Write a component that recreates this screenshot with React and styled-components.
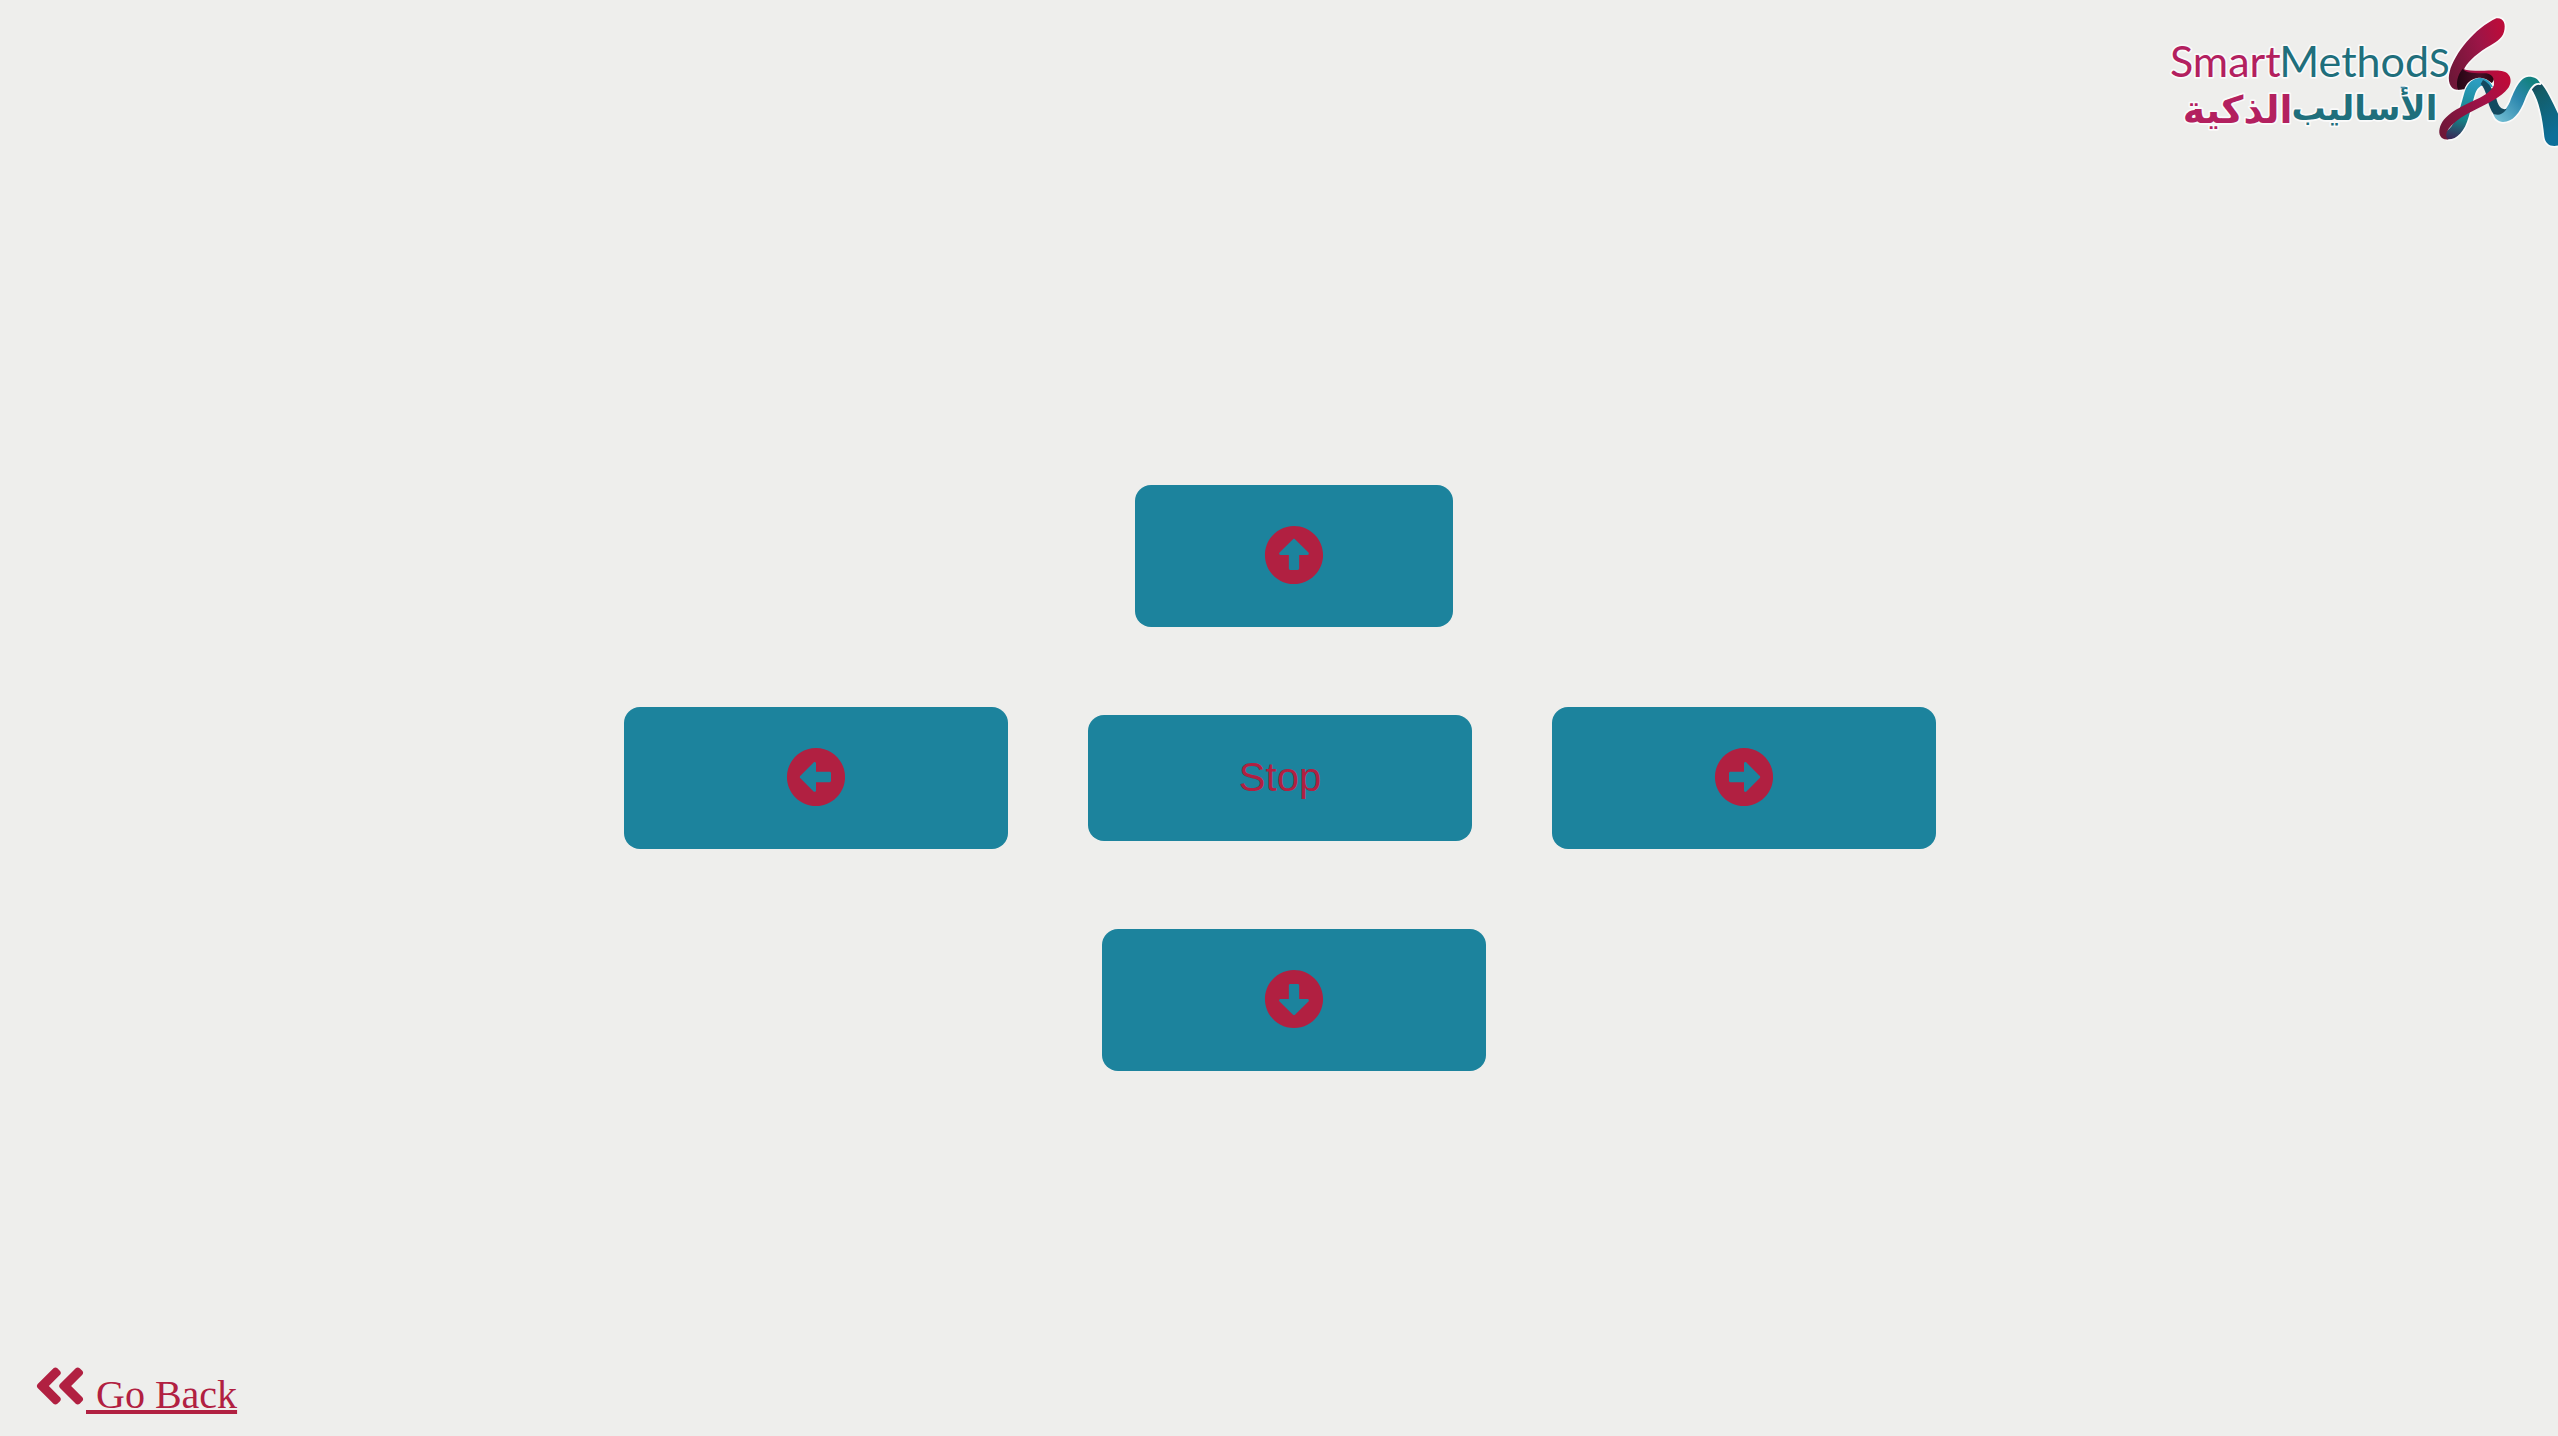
import React from "react";
import styled, { createGlobalStyle } from "styled-components";
import {
  FaArrowAltCircleUp,
  FaArrowAltCircleLeft,
  FaArrowAltCircleRight,
  FaArrowAltCircleDown,
  FaAngleDoubleLeft,
} from "react-icons/fa";

const GlobalStyle = createGlobalStyle`
  *, *::before, *::after { box-sizing: border-box; }
  body { margin: 0; background: #eeeeec; }
`;

const Page = styled.div`
  min-height: 100vh;
  display: flex;
  flex-direction: column;
  font-family: "Liberation Serif", "Times New Roman", serif;
`;

const Header = styled.header`
  display: flex;
  justify-content: flex-end;
  height: 200px;
`;

const LogoArt = styled.svg`
  display: block;
  width: 400px;
  height: 160px;
`;

const Pad = styled.main`
  flex: 1;
  display: flex;
  flex-direction: column;
  justify-content: center;
  gap: 80px;
  padding-left: 2px;
`;

const PadRow = styled.div`
  display: flex;
  justify-content: center;
  align-items: center;
  gap: 80px;
  padding-left: ${(p) => (p.$shifted ? "28px" : "0")};
`;

const PadButton = styled.button`
  display: flex;
  justify-content: center;
  width: ${(p) => (p.$narrow ? "318px" : "384px")};
  padding: ${(p) => (p.$icon ? "40px 0 42px" : "39px 0 41px")};
  border: 0;
  border-radius: 16px;
  background: #1c839d;
  color: #b12041;
  font-family: "Liberation Sans", Arial, sans-serif;
  font-size: 40px;
  line-height: 46px;
  cursor: pointer;

  svg {
    display: block;
    width: 60px;
    height: 60px;
  }
`;

const Footer = styled.footer`
  display: flex;
  height: 80px;
  padding: 0 30px;
`;

const BackLink = styled.a`
  display: flex;
  align-items: flex-start;
  padding-left: 4px;
  color: #b12041;
  font-size: 40px;
  line-height: 46px;
  text-decoration: none;

  svg {
    display: block;
    width: 52px;
    height: 60px;
  }
`;

const BackText = styled.span`
  padding-top: 16px;
  white-space: pre;
  text-decoration: underline;
  text-decoration-thickness: 4px;
  text-underline-offset: 2px;
  text-decoration-skip-ink: none;
`;

const LatinText = styled.text`
  font-family: Lato, "Open Sans", sans-serif;
  font-size: ${(p) => p.$size};
  fill: ${(p) => p.$color};
`;

const ArabicText = styled.text`
  font-family: "DejaVu Sans", sans-serif;
  font-size: ${(p) => p.$size};
  font-weight: 700;
  fill: ${(p) => p.$color};
`;

const Halo = styled.g`
  paint-order: stroke;
  stroke: #fafafa;
  stroke-width: 10px;
  stroke-linejoin: round;
`;

function Logo() {
  return (
    <LogoArt viewBox="0 0 1200 480" role="img" aria-label="Smart Methods">
      <defs>
        <linearGradient id="redTop" x1="0" y1="0.7" x2="1" y2="0.3">
          <stop offset="0" stopColor="#6f1738" />
          <stop offset="0.6" stopColor="#9c1547" />
          <stop offset="1" stopColor="#bb0c3a" />
        </linearGradient>
        <linearGradient id="redFront" x1="0" y1="0.8" x2="1" y2="0.2">
          <stop offset="0" stopColor="#6f1738" />
          <stop offset="0.6" stopColor="#a01248" />
          <stop offset="1" stopColor="#bf0a38" />
        </linearGradient>
        <linearGradient id="fold" x1="0" y1="0" x2="1" y2="0">
          <stop offset="0" stopColor="#250513" />
          <stop offset="0.6" stopColor="#4a0f28" />
          <stop offset="1" stopColor="#25040f" />
        </linearGradient>
        <linearGradient id="legLeft" x1="0.4" y1="0" x2="0.2" y2="1">
          <stop offset="0" stopColor="#2b9dc0" />
          <stop offset="0.65" stopColor="#158286" />
          <stop offset="1" stopColor="#3a2656" />
        </linearGradient>
        <linearGradient id="rise" x1="0" y1="0.9" x2="1" y2="0">
          <stop offset="0" stopColor="#74bfd4" />
          <stop offset="0.5" stopColor="#2c87ae" />
          <stop offset="0.85" stopColor="#12817f" />
        </linearGradient>
        <linearGradient id="legRight" x1="0" y1="0" x2="0.3" y2="1">
          <stop offset="0" stopColor="#17304f" />
          <stop offset="0.3" stopColor="#135c66" />
          <stop offset="1" stopColor="#0d6f99" />
        </linearGradient>
      </defs>

      <Halo>
        <LatinText x="36" y="231" $size="129px" $color="#b3205f">Smart</LatinText>
        <LatinText x="364" y="231" $size="129px" $color="#1f6f7c">
          Method<tspan fontSize="114">S</tspan>
        </LatinText>
        <ArabicText x="838" y="360" direction="rtl" $size="102px" $color="#1f6f7c">الأساليب</ArabicText>
        <ArabicText x="404" y="368" direction="rtl" $size="114px" $color="#b3205f">الذكية</ArabicText>
      </Halo>

      <Halo>
        <path fill="url(#legLeft)" d="M850 398C870 400 890 370 903 335L920 275C930 245 950 232 970 234C990 236 1000 250 1005 262L985 258C970 252 957 262 950 285L932 350C920 395 895 420 868 418Z" />
        <path fill="url(#legRight)" d="M1112 232C1150 228 1175 290 1202 345L1202 436C1178 442 1162 432 1159 410C1153 350 1142 290 1112 256Z" />
        <path fill="url(#rise)" d="M1006 342C1030 348 1044 330 1056 305C1070 270 1085 232 1112 230C1130 230 1142 238 1146 250C1125 245 1112 270 1100 300C1085 340 1065 365 1035 366C1020 366 1010 355 1006 342Z" />
        <path fill="url(#redTop)" d="M1015 55C1035 52 1045 70 1038 95C1032 118 1010 128 985 143C950 165 925 190 917 210L912 268L897 269C875 268 868 240 875 215C890 160 950 85 1015 55Z" />
      </Halo>
      <path fill="#124a60" d="M975 240C995 250 1004 268 1014 292C1020 318 1030 332 1046 326C1036 342 1024 346 1007 343C998 330 994 318 990 305C985 280 978 262 968 252Z" />
      <path fill="url(#fold)" d="M914 206C930 218 970 216 1000 216C1012 225 1010 243 1001 249C985 235 975 233 962 233C938 236 925 250 919 268L900 269C893 250 898 225 914 206Z" />
      <path fill="url(#redFront)" d="M915 207C940 216 990 211 1025 212C1060 214 1065 245 1050 265C1030 292 990 310 950 330C910 350 880 370 867 395C862 408 866 415 872 418C850 422 840 405 845 385C855 345 900 325 940 305C975 290 1000 275 1008 255C1010 235 1002 222 985 220C950 220 925 220 915 207Z" />
      <path fill="#4a8ba4" d="M728 260h14v5h-14z" />
    </LogoArt>
  );
}

export default function App() {
  return (
    <>
      <GlobalStyle />
      <Page>
        <Header>
          <Logo />
        </Header>
        <Pad>
          <PadRow $shifted>
            <PadButton type="button" aria-label="Forward" $icon $narrow>
              <FaArrowAltCircleUp />
            </PadButton>
          </PadRow>
          <PadRow>
            <PadButton type="button" aria-label="Left" $icon>
              <FaArrowAltCircleLeft />
            </PadButton>
            <PadButton type="button">Stop</PadButton>
            <PadButton type="button" aria-label="Right" $icon>
              <FaArrowAltCircleRight />
            </PadButton>
          </PadRow>
          <PadRow $shifted>
            <PadButton type="button" aria-label="Backward" $icon>
              <FaArrowAltCircleDown />
            </PadButton>
          </PadRow>
        </Pad>
        <Footer>
          <BackLink href="#back">
            <FaAngleDoubleLeft />
            <BackText> Go Back</BackText>
          </BackLink>
        </Footer>
      </Page>
    </>
  );
}
